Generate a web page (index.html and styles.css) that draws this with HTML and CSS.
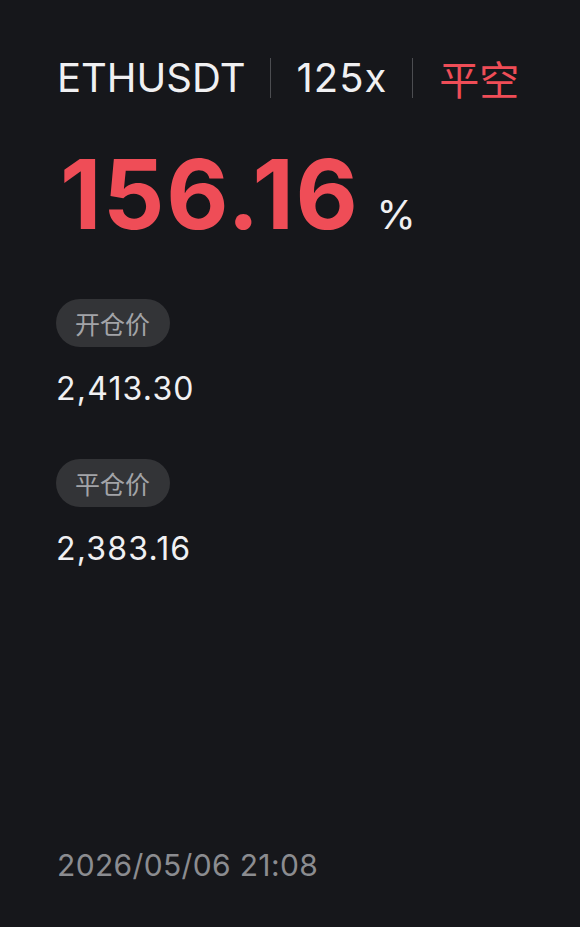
FILE: index.html
```html
<!DOCTYPE html>
<html lang="zh">
<head>
<meta charset="utf-8">
<link rel="stylesheet" href="styles.css">
</head>
<body>
<main class="card">
  <header class="head">
    <span class="sym">ETHUSDT</span>
    <span class="sep"></span>
    <span class="lev">125x</span>
    <span class="sep"></span>
    <span class="side">平空</span>
  </header>
  <div class="pnl"><span class="num">156.16</span><span class="pct">%</span></div>
  <section class="field">
    <span class="pill">开仓价</span>
    <span class="val">2,413.30</span>
  </section>
  <section class="field">
    <span class="pill">平仓价</span>
    <span class="val">2,383.16</span>
  </section>
  <div class="spacer"></div>
  <footer class="date">2026/05/06 21:08</footer>
</main>
</body>
</html>
```

FILE: styles.css
```css
html, body {
  margin: 0;
  padding: 0;
  background: #16171b;
}
body {
  font-family: Inter, "Noto Sans CJK SC", sans-serif;
  color: #f0f0f2;
}
.card {
  width: 580px;
  height: 927px;
  box-sizing: border-box;
  padding: 56px 0 0 56px;
  display: flex;
  flex-direction: column;
}
.head {
  display: flex;
  align-items: center;
  height: 44px;
  font-size: 40px;
  line-height: 44px;
}
.sym { margin-left: 1px; }
.sep {
  width: 1px;
  height: 40px;
  background: #4c4d51;
  margin: 0 26px 0 24px;
}
.lev { letter-spacing: 1px; padding-right: 1px; }
.side {
  color: #ef4d57;
  font-size: 40px;
  font-family: "Noto Sans CJK SC", sans-serif;
}
.pnl {
  display: flex;
  align-items: baseline;
  margin-top: 50px;
  height: 90px;
}
.num {
  color: #ef4d57;
  font-size: 96px;
  font-weight: 700;
  line-height: 88px;
  margin-left: 4px;
  letter-spacing: 1.7px;
}
.pct {
  font-size: 40px;
  margin-left: 17px;
  color: #f0f0f2;
}
.field {
  display: flex;
  flex-direction: column;
  align-items: flex-start;
}
.field:first-of-type { margin-top: 59px; }
.field + .field { margin-top: 51px; }
.pill {
  height: 48px;
  line-height: 48px;
  padding: 0 20px 0 19px;
  border-radius: 24px;
  background: #333437;
  color: #a3a4a8;
  font-size: 25px;
  font-family: "Noto Sans CJK SC", sans-serif;
}
.val {
  margin-top: 23px;
  font-size: 32px;
  line-height: 38px;
  margin-left: 0;
  letter-spacing: 1.2px;
}
.spacer { flex: 1; }
.date {
  font-size: 30px;
  color: #8b8c90;
  line-height: 36px;
  margin-bottom: 44px;
  margin-left: 1px;
  letter-spacing: 0.35px;
}
```
